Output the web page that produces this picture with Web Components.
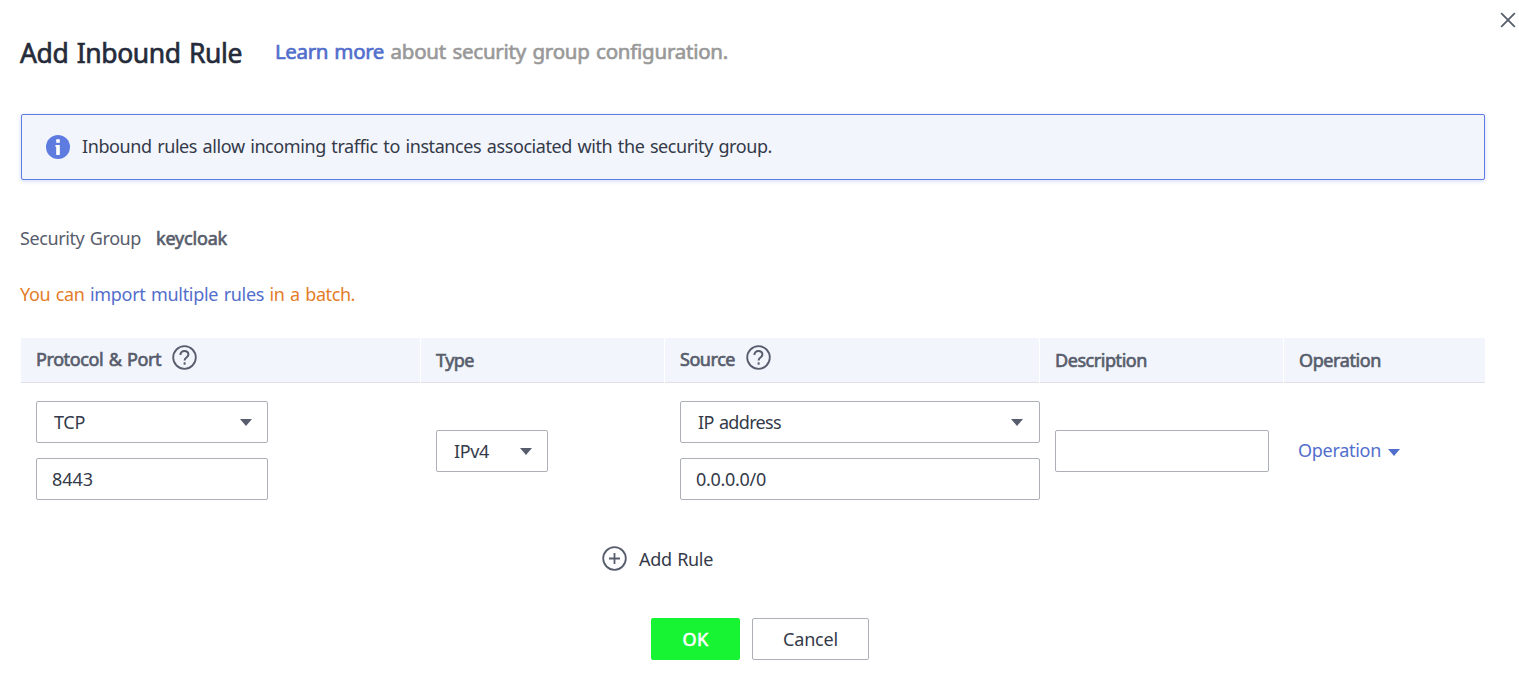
<!DOCTYPE html>
<html lang="en">
<head>
<meta charset="utf-8">
<title>Add Inbound Rule</title>
<style>
  body { margin: 0; background: #fff; font: 18px/26px "Noto Sans", sans-serif; color: #343a49; }
</style>
</head>
<body>
<inbound-dialog></inbound-dialog>
<script>
const define = (name, html, ready) => customElements.define(name, class extends HTMLElement {
  constructor() {
    super();
    this.attachShadow({ mode: 'open' });
    const t = document.createElement('template');
    t.innerHTML = html;
    this.shadowRoot.append(t.content.cloneNode(true));
  }
  connectedCallback() { if (ready) ready(this); }
});

// Single-line label; the "w" attribute spreads its letters over that many pixels.
define('ui-label', `<style>
  :host { display: inline-block; white-space: pre; flex: none; word-spacing: .07em; font-variant-ligatures: none; }
  :host([strong]) { -webkit-text-stroke: .65px currentColor; }
  :host([link]) { color: #526ecc; cursor: pointer; }
</style><slot></slot>`, el => {
  const w = +el.getAttribute('w');
  if (!w) return;
  const natural = el.getBoundingClientRect().width;
  el.style.letterSpacing = ((w - natural) / el.textContent.length).toFixed(3) + 'px';
});

define('help-icon', `<style>:host { display: block; width: 25px; height: 25px; } svg { display: block; }</style>
<svg width="25" height="25" viewBox="0 0 25 25" fill="none" stroke="#575d6c" stroke-width="2">
<circle cx="12.5" cy="12.5" r="11.3" stroke-width="1.8"/><path d="M8.4 10c0-2.5 1.6-3.9 4-3.9s4 1.3 4 3.5c0 3-3.8 2.8-3.8 5.8"/><path d="M12.6 17.3v2.4"/></svg>`);

define('info-icon', `<style>:host { display: block; width: 24px; height: 24px; } svg { display: block; }</style>
<svg width="24" height="24" viewBox="0 0 24 24"><circle cx="12" cy="12" r="12" fill="#5e7ce0"/><path d="M10.2 4.3h3.6v3.4h-3.6zM9.4 10h4.4v10h-3.6v-8.2h-.8z" fill="#fff"/></svg>`);

define('plus-icon', `<style>:host { display: block; width: 25px; height: 25px; } svg { display: block; }</style>
<svg width="25" height="25" viewBox="0 0 25 25" fill="none" stroke="#575d6c" stroke-width="1.8"><circle cx="12.5" cy="12.5" r="11.3"/><path d="M7 12.5h11M12.5 7v11"/></svg>`);

define('close-icon', `<style>:host { display: block; width: 14px; height: 14px; } svg { display: block; overflow: visible; }</style>
<svg width="14" height="14" viewBox="0 0 14 14" stroke="#575d6c" stroke-width="1.8"><path d="M.2.2l13.6 13.6M13.8.2L.2 13.8"/></svg>`);

define('caret-icon', `<style>:host { display: block; width: 12px; height: 7px; color: #575d6c; } svg { display: block; }</style>
<svg width="12" height="7" viewBox="0 0 12 7"><path d="M0 0h12L6 7z" fill="currentColor"/></svg>`);

define('ui-field', `<style>
  :host { display: flex; align-items: center; box-sizing: border-box; height: 42px; padding: 0 15px 1px; border: 1px solid #adb0b8; border-radius: 2px; background: #fff; }
  :host([select]) { padding-left: 17px; justify-content: space-between; }
  ::slotted(caret-icon) { margin-top: 2px; }
</style><slot></slot>`);

define('ui-button', `<style>
  :host { display: flex; align-items: center; justify-content: center; box-sizing: border-box; height: 42px; padding-bottom: 1px; border: 1px solid #adb0b8; border-radius: 2px; }
  :host([primary]) { background: #16f434; border-color: #16f434; color: #fff; }
</style><slot></slot>`);

define('info-banner', `<style>
  :host { display: flex; align-items: center; gap: 12px; box-sizing: border-box; height: 66px; padding: 0 24px; border: 1px solid #5e7ce0; border-radius: 2px; background: #f2f5fc; box-shadow: 0 1px 4px rgba(94,124,224,.3); }
  ::slotted(ui-label) { margin-top: -2px; }
</style><info-icon></info-icon><slot></slot>`);

define('rule-table', `<style>
  :host { display: block; }
  .grid { display: grid; grid-template-columns: 399px 243px 374px 243px 1fr; column-gap: 1px; }
  .head > div { display: flex; align-items: center; box-sizing: border-box; height: 45px; padding: 0 15px 1px; background: #f2f5fc; border-bottom: 1px solid #dfe1e6; color: #575d6c; }
  .head help-icon { margin: -5px 0 0 11px; }
  .head .up ui-label { margin-top: -2px; }
  .row { height: 136px; align-items: center; }
  .cell { padding-left: 15px; display: grid; gap: 15px; }
  .pair { margin-top: -1px; }
  .op { display: flex; align-items: center; gap: 7px; color: #526ecc; }
  .op ui-label { margin: -2px 0 0 -1px; }
  .op caret-icon { color: #526ecc; margin-top: 2px; }
</style>
<div class="grid head">
  <div class="up"><ui-label strong w="125">Protocol &amp; Port</ui-label><help-icon></help-icon></div>
  <div><ui-label strong w="38">Type</ui-label></div>
  <div class="up"><ui-label strong w="55">Source</ui-label><help-icon></help-icon></div>
  <div><ui-label strong w="92">Description</ui-label></div>
  <div><ui-label strong w="82">Operation</ui-label></div>
</div>
<div class="grid row">
  <div class="cell pair"><ui-field select style="width:232px"><ui-label w="31">TCP</ui-label><caret-icon></caret-icon></ui-field><ui-field style="width:232px"><ui-label w="41">8443</ui-label></ui-field></div>
  <div class="cell"><ui-field select style="width:112px"><ui-label w="35">IPv4</ui-label><caret-icon></caret-icon></ui-field></div>
  <div class="cell pair"><ui-field select style="width:360px;padding-right:16px"><ui-label w="83">IP address</ui-label><caret-icon></caret-icon></ui-field><ui-field style="width:360px"><ui-label w="70">0.0.0.0/0</ui-label></ui-field></div>
  <div class="cell"><ui-field style="width:214px"></ui-field></div>
  <div class="cell op"><ui-label link w="83">Operation</ui-label><caret-icon></caret-icon></div>
</div>`);

define('inbound-dialog', `<style>
  :host { display: block; position: relative; box-sizing: border-box; height: 673px; padding: 32px 34px 0 21px; }
  .close { position: absolute; right: 4px; top: 13px; }
  header { display: flex; align-items: center; height: 40px; margin: 0 0 42px -1px; color: #252b3a; }
  h1 { margin: 2px 33px 0 0; font-size: 26.5px; font-weight: 400; line-height: 40px; }
  .sub { font-size: 20.5px; line-height: 30px; color: #999; margin-top: -3px; }
  .group { display: flex; gap: 15px; height: 26px; margin: 45px 0 0 -1px; color: #575d6c; }
  .batch { height: 26px; margin: 30px 0 31px -1px; color: #e37d29; }
  .add { display: flex; align-items: center; gap: 12px; height: 26px; margin: 26px 0 0 581px; }
  .add ui-label { margin-top: 1px; }
  footer { display: flex; gap: 12px; margin: 47px 0 0 630px; }
</style>
<close-icon class="close"></close-icon>
<header><h1><ui-label strong w="222">Add Inbound Rule</ui-label></h1><div class="sub"><ui-label link strong w="109">Learn more</ui-label><ui-label strong w="344"> about security group configuration.</ui-label></div></header>
<info-banner><ui-label w="690">Inbound rules allow incoming traffic to instances associated with the security group.</ui-label></info-banner>
<div class="group"><ui-label w="121">Security Group</ui-label><ui-label strong w="71">keycloak</ui-label></div>
<div class="batch"><ui-label w="70">You can </ui-label><ui-label link w="174">import multiple rules</ui-label><ui-label w="91"> in a batch.</ui-label></div>
<rule-table></rule-table>
<div class="add"><plus-icon></plus-icon><ui-label w="74">Add Rule</ui-label></div>
<footer><ui-button primary style="width:89px"><ui-label strong w="26">OK</ui-label></ui-button><ui-button style="width:117px"><ui-label w="55">Cancel</ui-label></ui-button></footer>`);
</script>
</body>
</html>
